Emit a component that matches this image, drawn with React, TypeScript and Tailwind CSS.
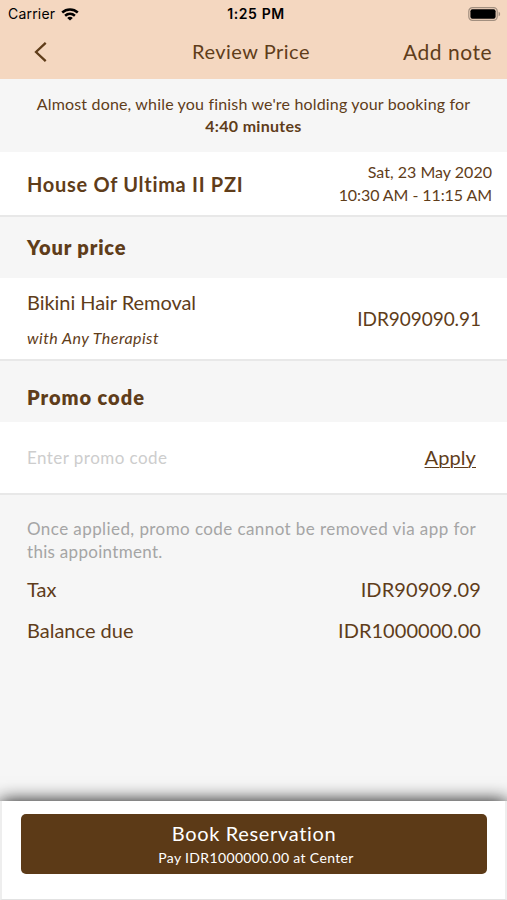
function StatusBar() {
    return (
        <div className="grid h-7 grid-cols-3 items-center pl-2 pr-1.5 font-['Inter',sans-serif] text-sm leading-none text-black">
            <div className="flex items-center gap-1.5">
                <span className="text-[14px] tracking-[0.2px]">Carrier</span>
                <svg className="h-[13px] w-[18px]" viewBox="0 0 18 13" fill="none" stroke="currentColor" strokeWidth="2.5">
                    <path d="M1.2 4.5C5.6 0.4 12.4 0.4 16.8 4.5" />
                    <path d="M4.1 7.8C7 5.2 11 5.2 13.9 7.8" />
                    <path d="M9 12.6L6.2 9.9C7.8 8.5 10.2 8.5 11.8 9.9Z" fill="currentColor" stroke="none" />
                </svg>
            </div>
            <span className="pl-[3px] text-center font-semibold tracking-[0.6px] whitespace-nowrap">1:25 PM</span>
            <svg className="h-[14px] w-[33px] justify-self-end" viewBox="0 0 33 14">
                <rect x="0.8" y="0.7" width="28.4" height="12.6" rx="3.6" fill="none" stroke="#a28f7f" strokeWidth="1.2" />
                <rect x="2.4" y="2.3" width="25.2" height="9.4" rx="2" fill="#000" />
                <path d="M30.6 4.7C32.6 5.3 32.6 8.7 30.6 9.3Z" fill="#a28f7f" />
            </svg>
        </div>
    )
}

function Header() {
    return (
        <header className="h-[79px] shrink-0 bg-[#f4d7c0]">
            <StatusBar />
            <div className="grid h-12 grid-cols-[158px_1fr_auto] items-center pl-[34px] pr-[15px]">
                <button>
                    <svg className="h-5 w-[13px]" viewBox="0 0 13 20" fill="none" stroke="currentColor" strokeWidth="2.3">
                        <path d="M11.7 0.8L2 10L11.7 19.2" />
                    </svg>
                </button>
                <h1 className="pb-0.5 text-[20px] tracking-[0.5px]">Review Price</h1>
                <button className="pb-px text-[21px] tracking-[0.5px]">Add note</button>
            </div>
        </header>
    )
}

export default function App() {
    return (
        <div className="flex h-[900px] w-[507px] flex-col overflow-hidden bg-[#f6f6f6] font-['Lato',sans-serif] text-[#5f3d1a]">
            <Header />
            <div className="h-[73px] shrink-0 pt-[14px] text-center text-base leading-[22px]">
                <p className="tracking-[0.17px]">Almost done, while you finish we're holding your booking for</p>
                <p className="font-bold tracking-[0.3px]">4:40 minutes</p>
            </div>
            <div className="flex h-[65px] shrink-0 items-center justify-between border-b-2 border-[#e8e8e8] bg-white pl-[27px] pr-[15px]">
                <h2 className="text-[20px] font-bold tracking-[0.7px]">House Of Ultima II PZI</h2>
                <div className="pb-0.5 text-right text-base leading-[23px]">
                    <p className="tracking-[0.02px]">Sat, 23 May 2020</p>
                    <p className="tracking-[-0.08px]">10:30 AM - 11:15 AM</p>
                </div>
            </div>
            <h2 className="h-[61px] shrink-0 pl-[27px] text-[20px] leading-[60px] font-extrabold tracking-[0.87px]">Your price</h2>
            <div className="flex h-[83px] shrink-0 items-center justify-between border-b-2 border-[#e8e8e8] bg-white pl-[27px] pr-[26px]">
                <div className="pt-0.5">
                    <p className="text-[20px] leading-9 tracking-[-0.05px]">Bikini Hair Removal</p>
                    <p className="text-base leading-9 italic tracking-[0.46px]">with Any Therapist</p>
                </div>
                <span className="pt-px text-[19px] tracking-[-0.05px]">IDR909090.91</span>
            </div>
            <h2 className="h-[61px] shrink-0 pl-[27px] pt-1.5 text-[20px] leading-[60px] font-extrabold tracking-[0.95px]">Promo code</h2>
            <div className="flex h-[73px] shrink-0 items-center justify-between border-b-2 border-[#e8e8e8] bg-white pl-[27px] pr-[31px]">
                <input
                    className="w-64 text-[17px] tracking-[0.45px] placeholder:text-[#cdcdcd]"
                    placeholder="Enter promo code"
                />
                <button className="pb-0.5 text-[20px] tracking-[0.1px] underline decoration-1 underline-offset-2">Apply</button>
            </div>
            <div className="pl-[27px] pr-[26px] pt-[22px]">
                <div className="text-[17px] leading-[23px] text-[#a5a5a5]">
                    <p className="whitespace-nowrap tracking-[0.42px]">Once applied, promo code cannot be removed via app for</p>
                    <p className="tracking-[0.3px]">this appointment.</p>
                </div>
                <div className="mt-[5px] flex h-[41px] items-center justify-between text-[20px]">
                    <span className="tracking-[0px]">Tax</span>
                    <span className="tracking-[0.1px]">IDR90909.09</span>
                </div>
                <div className="flex h-[41px] items-center justify-between text-[20px]">
                    <span className="tracking-[0px]">Balance due</span>
                    <span className="tracking-[0.04px]">IDR1000000.00</span>
                </div>
            </div>
            <footer className="mt-auto h-[99px] shrink-0 border-x-2 border-b border-x-[#eeeeee] border-b-[#e2e2e2] bg-white pl-[19px] pr-[18px] pt-[13px] shadow-[0_0_17px_0_rgba(0,0,0,0.95)]">
                <button className="flex h-[60px] w-full flex-col items-center rounded-[5px] bg-[#5c3a17] pt-[7px] text-white">
                    <span className="text-[20px] leading-6 tracking-[0.65px]">Book Reservation</span>
                    <span className="pl-1 pt-px text-[14px] leading-6 tracking-[0.35px]">Pay IDR1000000.00 at Center</span>
                </button>
            </footer>
        </div>
    )
}
